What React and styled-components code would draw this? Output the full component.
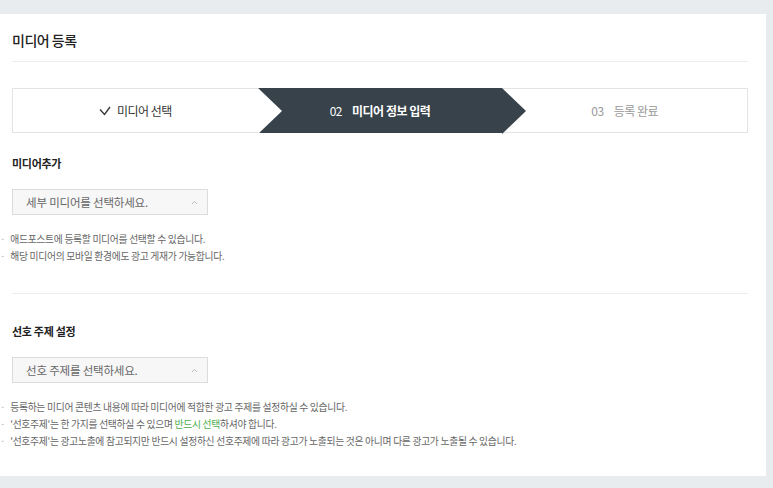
import React from 'react';
import styled, { createGlobalStyle } from 'styled-components';

const Global = createGlobalStyle`
  html, body { margin:0; padding:0; background:#e9ecef; }
  body { font-family:"Noto Sans CJK KR","Noto Sans",sans-serif; }
`;

const Page = styled.div`
  padding:14px 7px 12px 0;
  width:773px;
  height:488px;
  box-sizing:border-box;
`;

const Card = styled.div`
  background:#fff;
  padding:0 18px 14px 12px;
  height:100%;
  box-sizing:border-box;
`;

const Title = styled.h1`
  margin:0;
  font-size:14px;
  font-weight:500;
  color:#222;
  height:47px;
  line-height:52px;
  border-bottom:1px solid #ececec;
  letter-spacing:-0.5px;
`;

const Steps = styled.div`
  display:grid;
  grid-template-columns:repeat(3,1fr);
  height:43px;
  margin-top:26px;
  border:1px solid #e3e3e3;
`;

const Step = styled.div`
  position:relative;
  display:flex;
  align-items:center;
  justify-content:center;
  gap:6px;
  font-size:12px;
  letter-spacing:-0.5px;
  color:${p => p.$state === 'on' ? '#fff' : p.$state === 'done' ? '#333' : '#999'};
  font-weight:${p => p.$state === 'on' ? 700 : 400};
  background:${p => p.$state === 'on' ? '#37424a' : 'transparent'};
  margin:${p => p.$state === 'on' ? '-1px 0' : '0'};
  z-index:${p => p.$state === 'on' ? 1 : 0};

  ${p => p.$state === 'on' && `
    &::before{
      content:'';
      position:absolute;
      left:0; top:0;
      border-left:24px solid #fff;
      border-top:23px solid transparent;
      border-bottom:23px solid transparent;
    }
    &::after{
      content:'';
      position:absolute;
      left:100%; top:0;
      border-left:24px solid #37424a;
      border-top:23px solid transparent;
      border-bottom:23px solid transparent;
    }
  `}
`;

const Num = styled.span`
  font-weight:400;
  margin-right:4px;
`;

const Section = styled.div`
  padding:${p => p.$first ? '22px 0 28px' : '29px 0 0'};
  border-bottom:${p => p.$first ? '1px solid #ececec' : 'none'};
`;

const Label = styled.h2`
  margin:0 0 18px;
  font-size:11px;
  font-weight:700;
  color:#222;
  letter-spacing:-0.3px;
`;

const Select = styled.div`
  width:196px;
  height:26px;
  box-sizing:border-box;
  border:1px solid #dcdcdc;
  background:#f7f7f7;
  display:flex;
  align-items:center;
  justify-content:space-between;
  padding:0 9px 0 13px;
  font-size:11.5px;
  color:#666;
  letter-spacing:-0.2px;
`;

const Notes = styled.ul`
  list-style:none;
  margin:16px 0 0 -12px;
  padding:0;
`;

const Note = styled.li`
  font-size:9.8px;
  line-height:17px;
  color:#666;
  letter-spacing:-0.3px;
  &::before{ content:'·'; margin-right:5px; color:#999; }
`;

const Green = styled.span`
  color:#4cae4c;
`;

function Caret() {
  return (
    <svg width="7" height="5" viewBox="0 0 7 5">
      <path d="M1 4 L3.5 1.5 L6 4" fill="none" stroke="#bbb" strokeWidth="1" />
    </svg>
  );
}

function Check() {
  return (
    <svg width="12" height="10" viewBox="0 0 12 10">
      <path d="M1 3.5 L5.5 8.5 L11 1" fill="none" stroke="#333" strokeWidth="1.3" />
    </svg>
  );
}

export default function App() {
  return (
    <>
      <Global />
      <Page>
        <Card>
          <Title>미디어 등록</Title>
          <Steps>
            <Step $state="done"><Check />미디어 선택</Step>
            <Step $state="on"><Num>02</Num>미디어 정보 입력</Step>
            <Step><Num>03</Num>등록 완료</Step>
          </Steps>

          <Section $first>
            <Label>미디어추가</Label>
            <Select>세부 미디어를 선택하세요.<Caret /></Select>
            <Notes>
              <Note>애드포스트에 등록할 미디어를 선택할 수 있습니다.</Note>
              <Note>해당 미디어의 모바일 환경에도 광고 게재가 가능합니다.</Note>
            </Notes>
          </Section>

          <Section>
            <Label>선호 주제 설정</Label>
            <Select>선호 주제를 선택하세요.<Caret /></Select>
            <Notes>
              <Note>등록하는 미디어 콘텐츠 내용에 따라 미디어에 적합한 광고 주제를 설정하실 수 있습니다.</Note>
              <Note>'선호주제'는 한 가지를 선택하실 수 있으며 <Green>반드시 선택</Green>하셔야 합니다.</Note>
              <Note>'선호주제'는 광고노출에 참고되지만 반드시 설정하신 선호주제에 따라 광고가 노출되는 것은 아니며 다른 광고가 노출될 수 있습니다.</Note>
            </Notes>
          </Section>
        </Card>
      </Page>
    </>
  );
}
